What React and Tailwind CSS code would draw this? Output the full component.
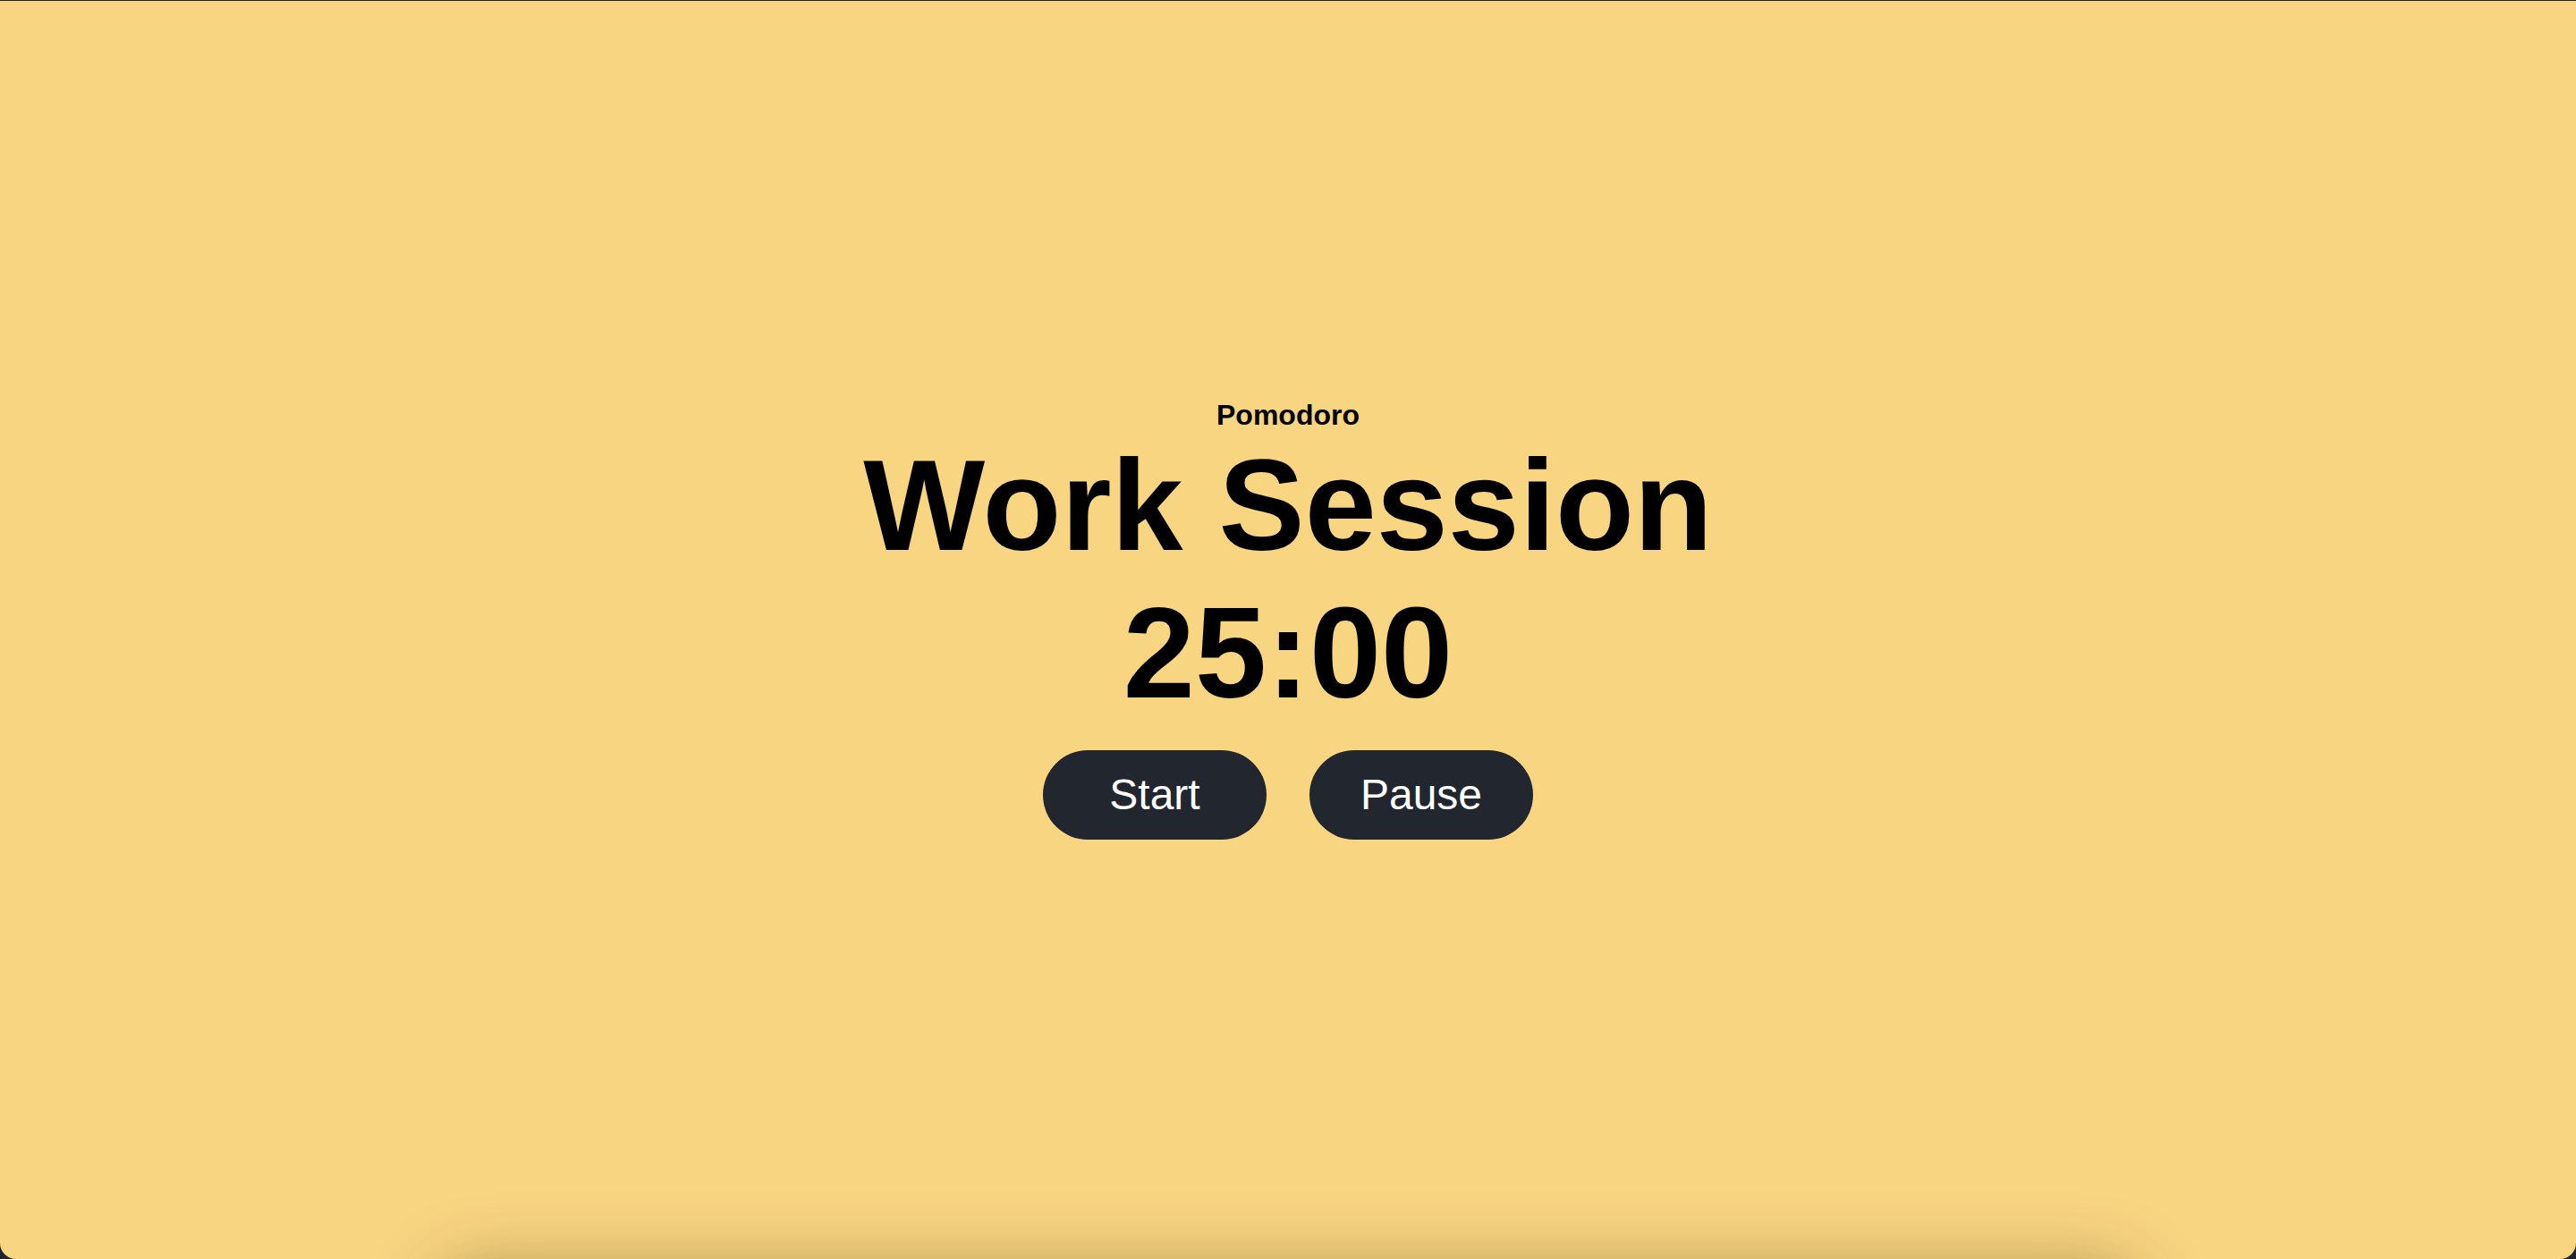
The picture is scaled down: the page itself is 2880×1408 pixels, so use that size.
export default function App() {
  return (
    <div className="min-h-screen w-full bg-[#1e2530] pt-px" style={{ fontFamily: '"Liberation Sans", Arial, sans-serif' }}>
      <div className="relative h-[1407px] w-full overflow-hidden rounded-b-[18px] bg-[#f8d581]">
        <div className="flex flex-col items-center pt-[445px] text-black">
          <div className="text-[32px] font-bold leading-[1.15]">Pomodoro</div>
          <h1 className="text-[144px] font-bold leading-[1.15]">Work Session</h1>
          <div className="text-[144px] font-bold leading-[1.15]">25:00</div>
          <div className="mt-[25px] flex gap-[48px]">
            <button className="flex h-[100px] w-[250px] items-center justify-center rounded-full bg-[#22262f] text-[48px] text-white">
              Start
            </button>
            <button className="flex h-[100px] w-[250px] items-center justify-center rounded-full bg-[#22262f] text-[48px] text-white">
              Pause
            </button>
          </div>
        </div>
        <div className="pointer-events-none absolute left-[490px] top-[1420px] h-[200px] w-[1900px] rounded-[40px] shadow-[0_0_80px_rgba(60,40,0,0.4)]"></div>
      </div>
    </div>
  );
}
